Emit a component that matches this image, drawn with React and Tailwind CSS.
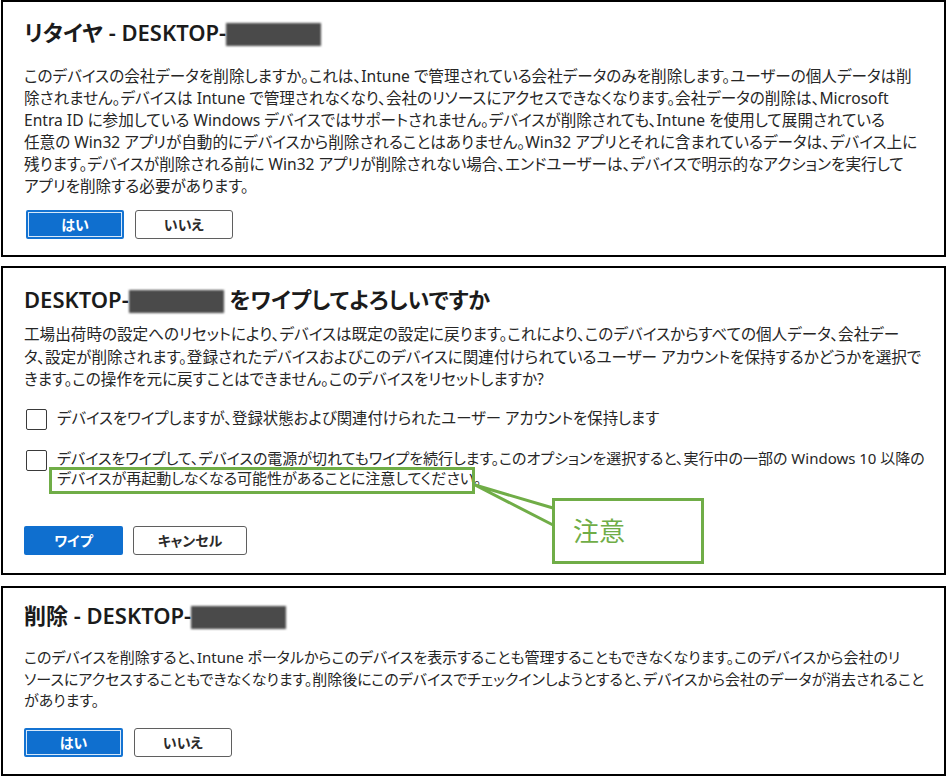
import { useState } from "react";

const body = "[font-family:'Noto_Sans','Noto_Sans_CJK_JP',sans-serif] [font-feature-settings:'palt']";

function Redacted({ className }) {
  return <span className={`inline-block h-[23px] bg-[#4a4a4a] blur-[1px] align-[-5px] ${className}`} />;
}

function Button({ children, primary, focused, className = "" }) {
  if (primary) {
    return (
      <button
        className={`h-[29px] rounded-[2px] bg-[#0f6fcf] text-[14px] font-bold text-white ${
          focused ? "border-2 border-[#1473d2] shadow-[inset_0_0_0_1px_#d6e8fa]" : ""
        } ${className}`}
      >
        {children}
      </button>
    );
  }
  return (
    <button
      className={`h-[29px] rounded-[3px] border-[1.5px] border-[#5f5f5f] bg-white text-[14px] font-bold text-[#2b2b2b] ${className}`}
    >
      {children}
    </button>
  );
}

// one div per line, the breaks follow the portal's wrapping
function Lines({ lines, leading, size = "text-[15px]" }) {
  return (
    <div className={`whitespace-nowrap text-[#262626] ${size} ${leading}`}>
      {lines.map((l) => (
        <div key={l}>{l}</div>
      ))}
    </div>
  );
}

function Checkbox({ checked, onChange }) {
  return (
    <button
      onClick={onChange}
      className="mt-[1.5px] h-[21px] w-[21px] shrink-0 rounded-[2px] border-[1.5px] border-[#3a3a3a] bg-white"
    >
      {checked ? "✓" : null}
    </button>
  );
}

function RetirePanel() {
  return (
    <section className="h-[257px] border-2 border-black bg-white pl-[21px] pt-[15px]">
      <h2 className="text-[22px] font-semibold leading-[30px] text-[#1b1b1b]">
        リタイヤ - DESKTOP-<Redacted className="w-[95px]" />
      </h2>
      <div className="mt-[18px]">
        <Lines
          size="text-[15.6px]"
          leading="leading-[22px]"
          lines={[
            "このデバイスの会社データを削除しますか。これは、Intune で管理されている会社データのみを削除します。ユーザーの個人データは削",
            "除されません。デバイスは Intune で管理されなくなり、会社のリソースにアクセスできなくなります。会社データの削除は、Microsoft",
            "Entra ID に参加している Windows デバイスではサポートされません。デバイスが削除されても、Intune を使用して展開されている",
            "任意の Win32 アプリが自動的にデバイスから削除されることはありません。Win32 アプリとそれに含まれているデータは、デバイス上に",
            "残ります。デバイスが削除される前に Win32 アプリが削除されない場合、エンドユーザーは、デバイスで明示的なアクションを実行して",
            "アプリを削除する必要があります。",
          ]}
        />
      </div>
      <div className="ml-[2px] mt-[13px] flex gap-[11px]">
        <Button primary focused className="w-[98px]">はい</Button>
        <Button className="w-[98px]">いいえ</Button>
      </div>
    </section>
  );
}

function WipePanel() {
  const [keepEnrollment, setKeepEnrollment] = useState(false);
  const [continueWipe, setContinueWipe] = useState(false);

  return (
    <section className="relative h-[309px] border-2 border-black bg-white pl-[21px] pt-[16px]">
      <h2 className="text-[22px] font-semibold leading-[30px] text-[#1b1b1b]">
        DESKTOP-<Redacted className="w-[95px]" /> をワイプしてよろしいですか
      </h2>
      <div className="mt-[9px]">
        <Lines
          size="text-[15.6px]"
          leading="leading-[22.5px]"
          lines={[
            "工場出荷時の設定へのリセットにより、デバイスは既定の設定に戻ります。これにより、このデバイスからすべての個人データ、会社デー",
            "タ、設定が削除されます。登録されたデバイスおよびこのデバイスに関連付けられているユーザー アカウントを保持するかどうかを選択で",
            "きます。この操作を元に戻すことはできません。このデバイスをリセットしますか?",
          ]}
        />
      </div>
      <label className="ml-[2px] mt-[17px] flex items-start gap-[10px]">
        <Checkbox checked={keepEnrollment} onChange={() => setKeepEnrollment(!keepEnrollment)} />
        <span className="whitespace-nowrap text-[15.4px] leading-[22px] text-[#262626]">
          デバイスをワイプしますが、登録状態および関連付けられたユーザー アカウントを保持します
        </span>
      </label>
      <label className="ml-[2px] mt-[18px] flex items-start gap-[10px]">
        <Checkbox checked={continueWipe} onChange={() => setContinueWipe(!continueWipe)} />
        <Lines
          leading="leading-[20px]"
          lines={[
            "デバイスをワイプして、デバイスの電源が切れてもワイプを続行します。このオプションを選択すると、実行中の一部の Windows 10 以降の",
            "デバイスが再起動しなくなる可能性があることに注意してください。",
          ]}
        />
      </label>
      <div className="mt-[38px] flex gap-[10px]">
        <Button primary className="w-[99px]">ワイプ</Button>
        <Button className="w-[114px]">キャンセル</Button>
      </div>

      {/* annotation: highlight box + callout */}
      <svg className="pointer-events-none absolute left-[-2px] top-[-2px]" width="948" height="309">
        <rect x="49.5" y="202.5" width="423" height="24" fill="none" stroke="#70ad47" strokeWidth="3" />
        <polyline points="552,242 474,219 552,259" fill="none" stroke="#70ad47" strokeWidth="3" />
      </svg>
      <div className="absolute left-[549px] top-[230px] flex h-[66px] w-[152px] items-center border-[3px] border-[#70ad47] bg-white pl-[18px] text-[26px] text-[#70ad47]">
        注意
      </div>
    </section>
  );
}

function DeletePanel() {
  return (
    <section className="h-[190px] border-2 border-black bg-white pl-[21px] pt-[12px]">
      <h2 className="text-[22px] font-semibold leading-[30px] text-[#1b1b1b]">
        削除 - DESKTOP-<Redacted className="w-[95px]" />
      </h2>
      <div className="mt-[17px]">
        <Lines
          leading="leading-[21.5px]"
          lines={[
            "このデバイスを削除すると、Intune ポータルからこのデバイスを表示することも管理することもできなくなります。このデバイスから会社のリ",
            "ソースにアクセスすることもできなくなります。削除後にこのデバイスでチェックインしようとすると、デバイスから会社のデータが消去されること",
            "があります。",
          ]}
        />
      </div>
      <div className="mt-[16px] flex gap-[11px]">
        <Button primary focused className="w-[99px]">はい</Button>
        <Button className="w-[98px]">いいえ</Button>
      </div>
    </section>
  );
}

export default function App() {
  return (
    <div className={`flex h-[777px] w-[948px] flex-col bg-white pl-[1px] pr-[2px] ${body}`}>
      <RetirePanel />
      <div className="h-[9px]" />
      <WipePanel />
      <div className="h-[11px]" />
      <DeletePanel />
    </div>
  );
}
